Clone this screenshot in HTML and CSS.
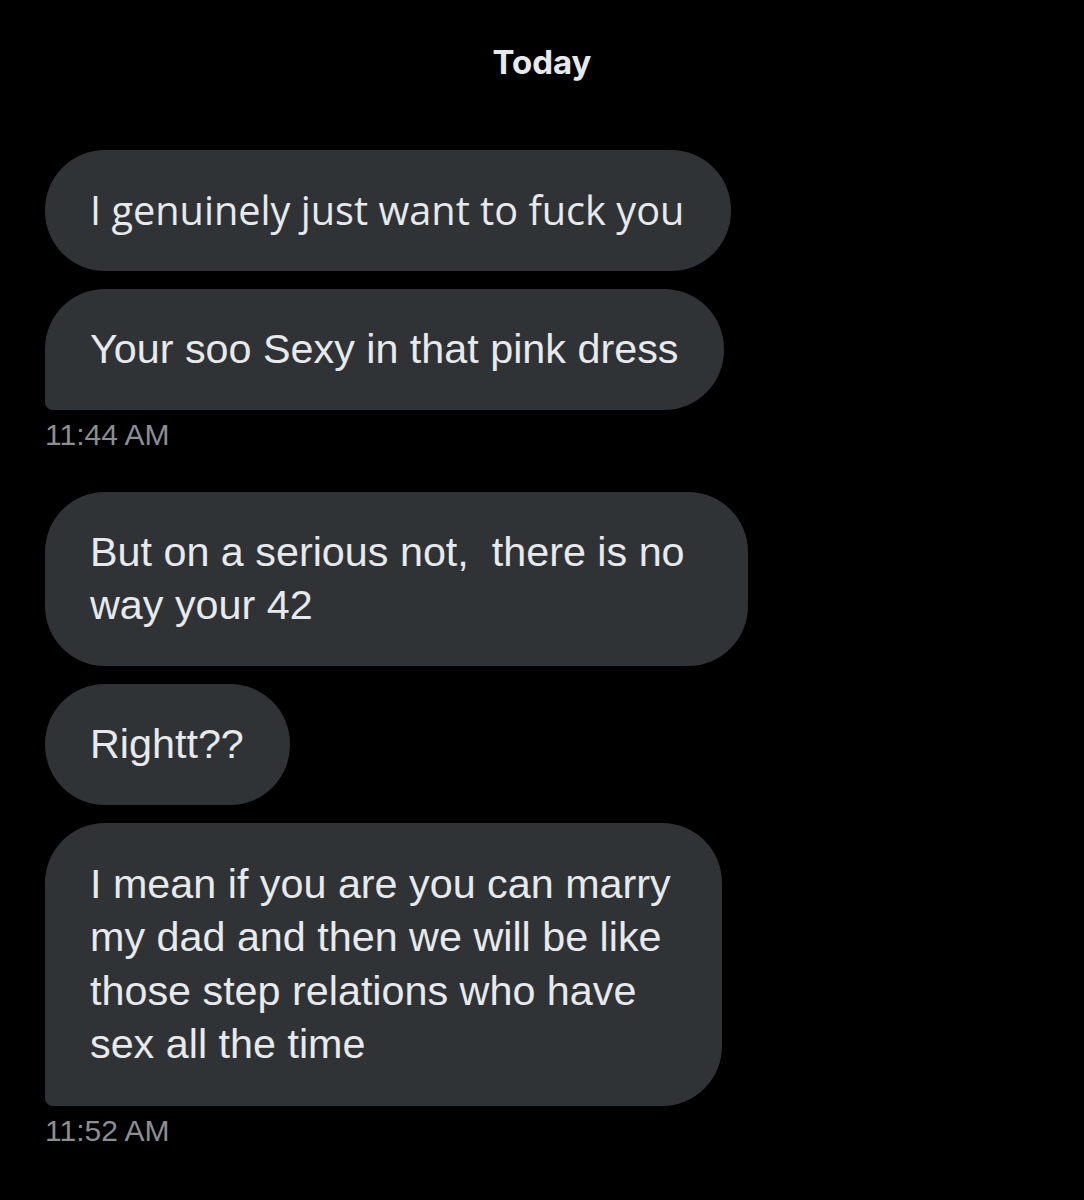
FILE: index.html
```html
<!DOCTYPE html>
<html lang="en">
<head>
<meta charset="utf-8">
<title>Messages</title>
<link rel="stylesheet" href="styles.css">
</head>
<body>
<main class="chat">
  <div class="day">Today</div>
  <div class="group">
    <div class="bubble alt">I genuinely just want to fuck you</div>
    <div class="bubble last">Your soo Sexy in that pink dress</div>
    <div class="time">11:44 AM</div>
  </div>
  <div class="group">
    <div class="bubble wide">But on a serious not,&nbsp; there is no<br>way your 42</div>
    <div class="bubble">Rightt??</div>
    <div class="bubble long last">I mean if you are you can marry<br>my dad and then we will be like<br>those step relations who have<br>sex all the time</div>
    <div class="time">11:52 AM</div>
  </div>
</main>
</body>
</html>
```
FILE: styles.css
```css
html, body {
  margin: 0;
  padding: 0;
  background: #000;
}
body {
  width: 1084px;
  height: 1200px;
  overflow: hidden;
  font-family: "Liberation Sans", Arial, sans-serif;
  color: #e7e9ea;
}
.chat {
  padding: 42px 0 0 45px;
  display: flex;
  flex-direction: column;
}
.day {
  font-family: Inter, "Liberation Sans", sans-serif;
  font-weight: 700;
  font-size: 33px;
  line-height: 40px;
  text-align: center;
  margin-left: -45px;
  margin-bottom: 68px;
  color: #e7e9ea;
}
.group {
  display: flex;
  flex-direction: column;
  align-items: flex-start;
  gap: 18px;
  margin-bottom: 40px;
}
.bubble {
  background: #2f3336;
  border-radius: 60px;
  padding: 34px 46px 34px 45px;
  font-size: 41.3px;
  line-height: 53px;
  white-space: nowrap;
}
.bubble.alt {
  font-family: "Open Sans", "Liberation Sans", sans-serif;
  font-size: 39.7px;
  padding-right: 47px;
}
.bubble.wide {
  padding-right: 63px;
}
.bubble.long {
  padding-right: 51px;
  padding-top: 35px;
  padding-bottom: 35px;
  line-height: 53.3px;
}
.bubble.last {
  border-bottom-left-radius: 8px;
}
.time {
  margin-top: -10px;
  font-size: 30px;
  line-height: 34px;
  color: #8b8e92;
}
```
